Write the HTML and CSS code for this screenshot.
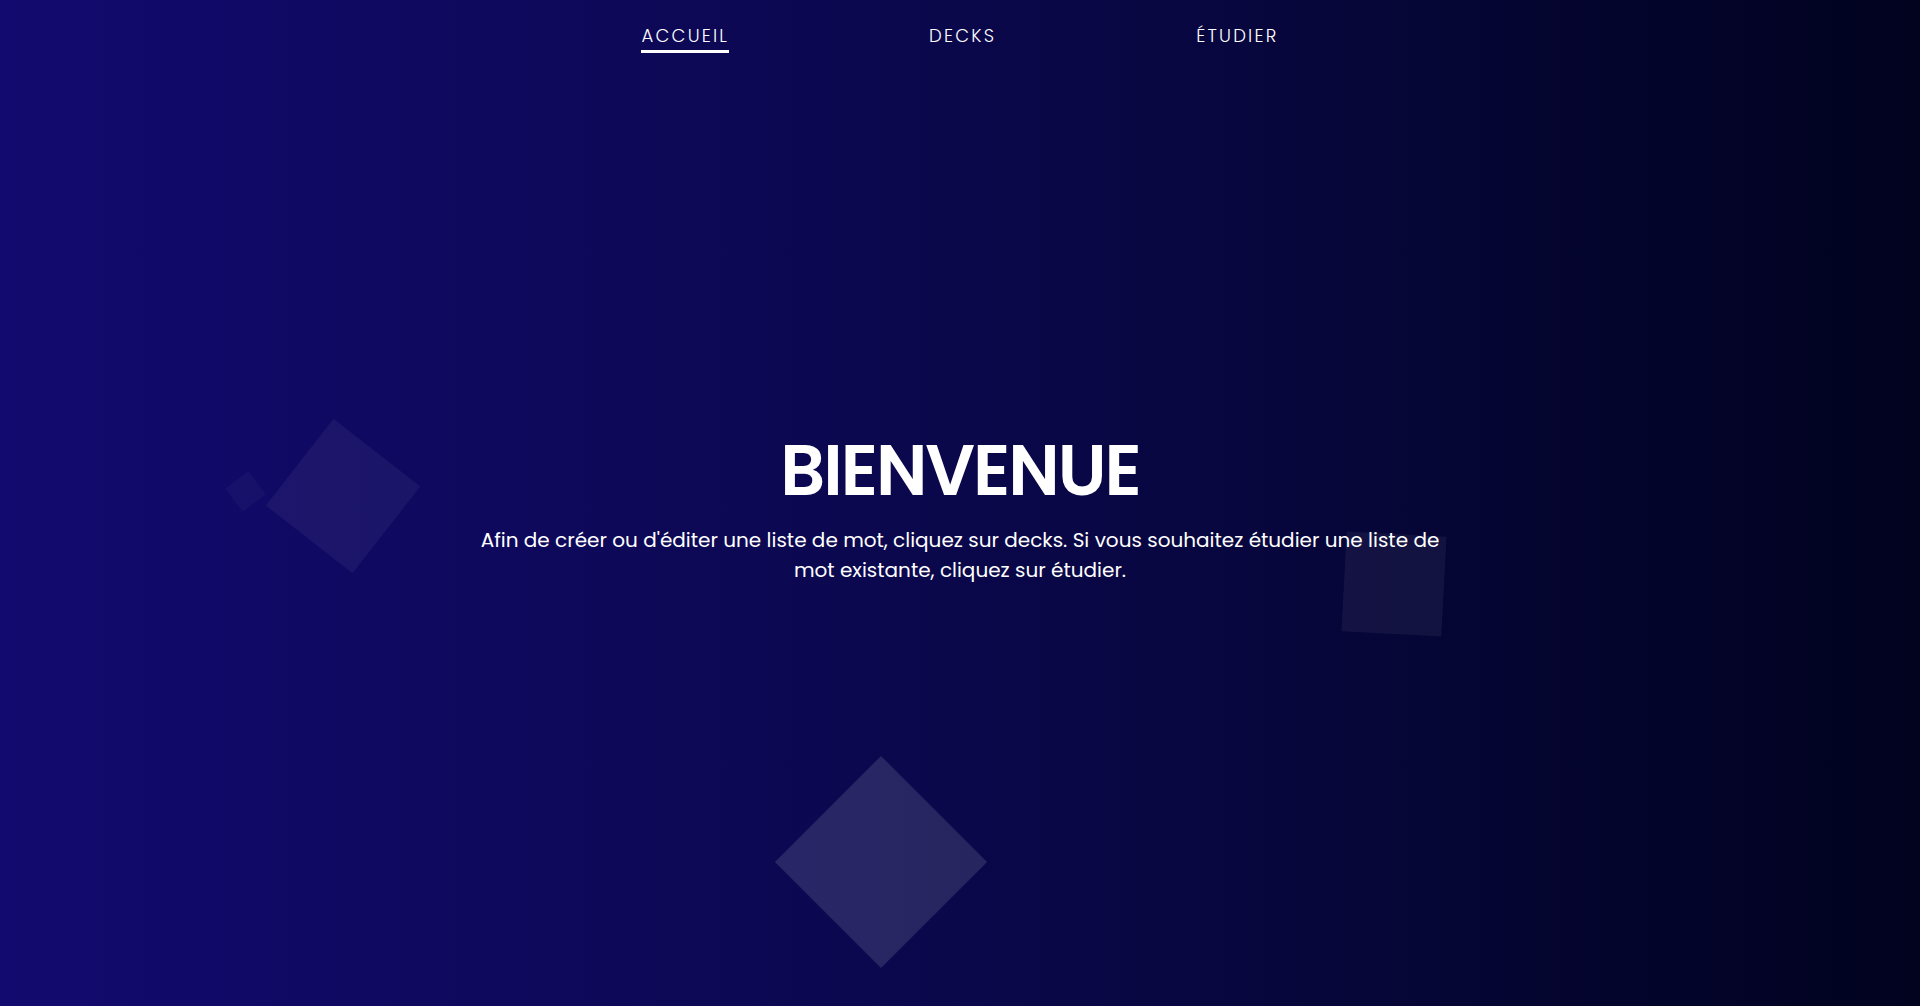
FILE: index.html
```html
<!DOCTYPE html>
<html lang="fr">
<head>
<meta charset="utf-8">
<title>Accueil</title>
<link rel="stylesheet" href="styles.css">
</head>
<body>
<div class="page">
  <ul class="squares" aria-hidden="true">
    <li class="sq sq-big-left"></li>
    <li class="sq sq-small-left"></li>
    <li class="sq sq-right"></li>
    <li class="sq sq-bottom"></li>
  </ul>
  <nav class="nav">
    <a class="nav-link active" href="#">ACCUEIL</a>
    <a class="nav-link" href="#">DECKS</a>
    <a class="nav-link" href="#">ÉTUDIER</a>
  </nav>
  <main class="hero">
    <h1 class="title">BIENVENUE</h1>
    <p class="lead">Afin de créer ou d'éditer une liste de mot, cliquez sur decks. Si vous souhaitez étudier une liste de mot existante, cliquez sur étudier.</p>
  </main>
</div>
</body>
</html>
```
FILE: styles.css
```css
* { box-sizing: border-box; }
html, body { margin: 0; padding: 0; height: 100%; }
body {
  font-family: "Poppins", "Open Sans", "Noto Sans", sans-serif;
  color: #fff;
  background: linear-gradient(to right, #130a6f 0%, #0b084f 45%, #01031f 100%);
  overflow: hidden;
}
.page {
  position: relative;
  height: 100vh;
  display: flex;
  flex-direction: column;
}
.squares {
  position: absolute;
  inset: 0;
  margin: 0;
  padding: 0;
  list-style: none;
  overflow: hidden;
  pointer-events: none;
}
.sq {
  position: absolute;
  display: block;
  background: rgba(255, 255, 255, 0.05);
}
.sq-big-left { left: 288px; top: 441px; width: 110px; height: 110px; transform: rotate(38deg); }
.sq-small-left { left: 231px; top: 477px; width: 29px; height: 29px; transform: rotate(53deg); background: rgba(255,255,255,0.03); }
.sq-right { left: 1344px; top: 534px; width: 100px; height: 100px; transform: rotate(3deg); background: rgba(255,255,255,0.055); }
.sq-bottom { left: 806px; top: 787px; width: 150px; height: 150px; transform: rotate(45deg); background: rgba(255,255,255,0.12); }

.nav {
  position: relative;
  display: flex;
  justify-content: center;
  gap: 200px;
  padding-top: 24px;
}
.nav-link {
  position: relative;
  color: #fff;
  text-decoration: none;
  font-size: 18px;
  font-weight: 300;
  letter-spacing: 2.2px;
  line-height: 24px;
  padding-bottom: 6px;
}
.nav-link.active::after {
  content: "";
  position: absolute;
  left: -1px;
  right: 0;
  bottom: 1px;
  height: 3px;
  background: #fff;
}
.hero {
  position: relative;
  flex: 1;
  display: flex;
  flex-direction: column;
  align-items: center;
  justify-content: center;
  text-align: center;
  padding-bottom: 46px;
}
.title {
  margin: 0 0 12px;
  font-size: 70px;
  font-weight: 600;
  letter-spacing: -2px;
  line-height: 84px;
}
.lead {
  margin: 0;
  width: 985px;
  font-size: 20px;
  font-weight: 400;
  line-height: 30px;
}
```
